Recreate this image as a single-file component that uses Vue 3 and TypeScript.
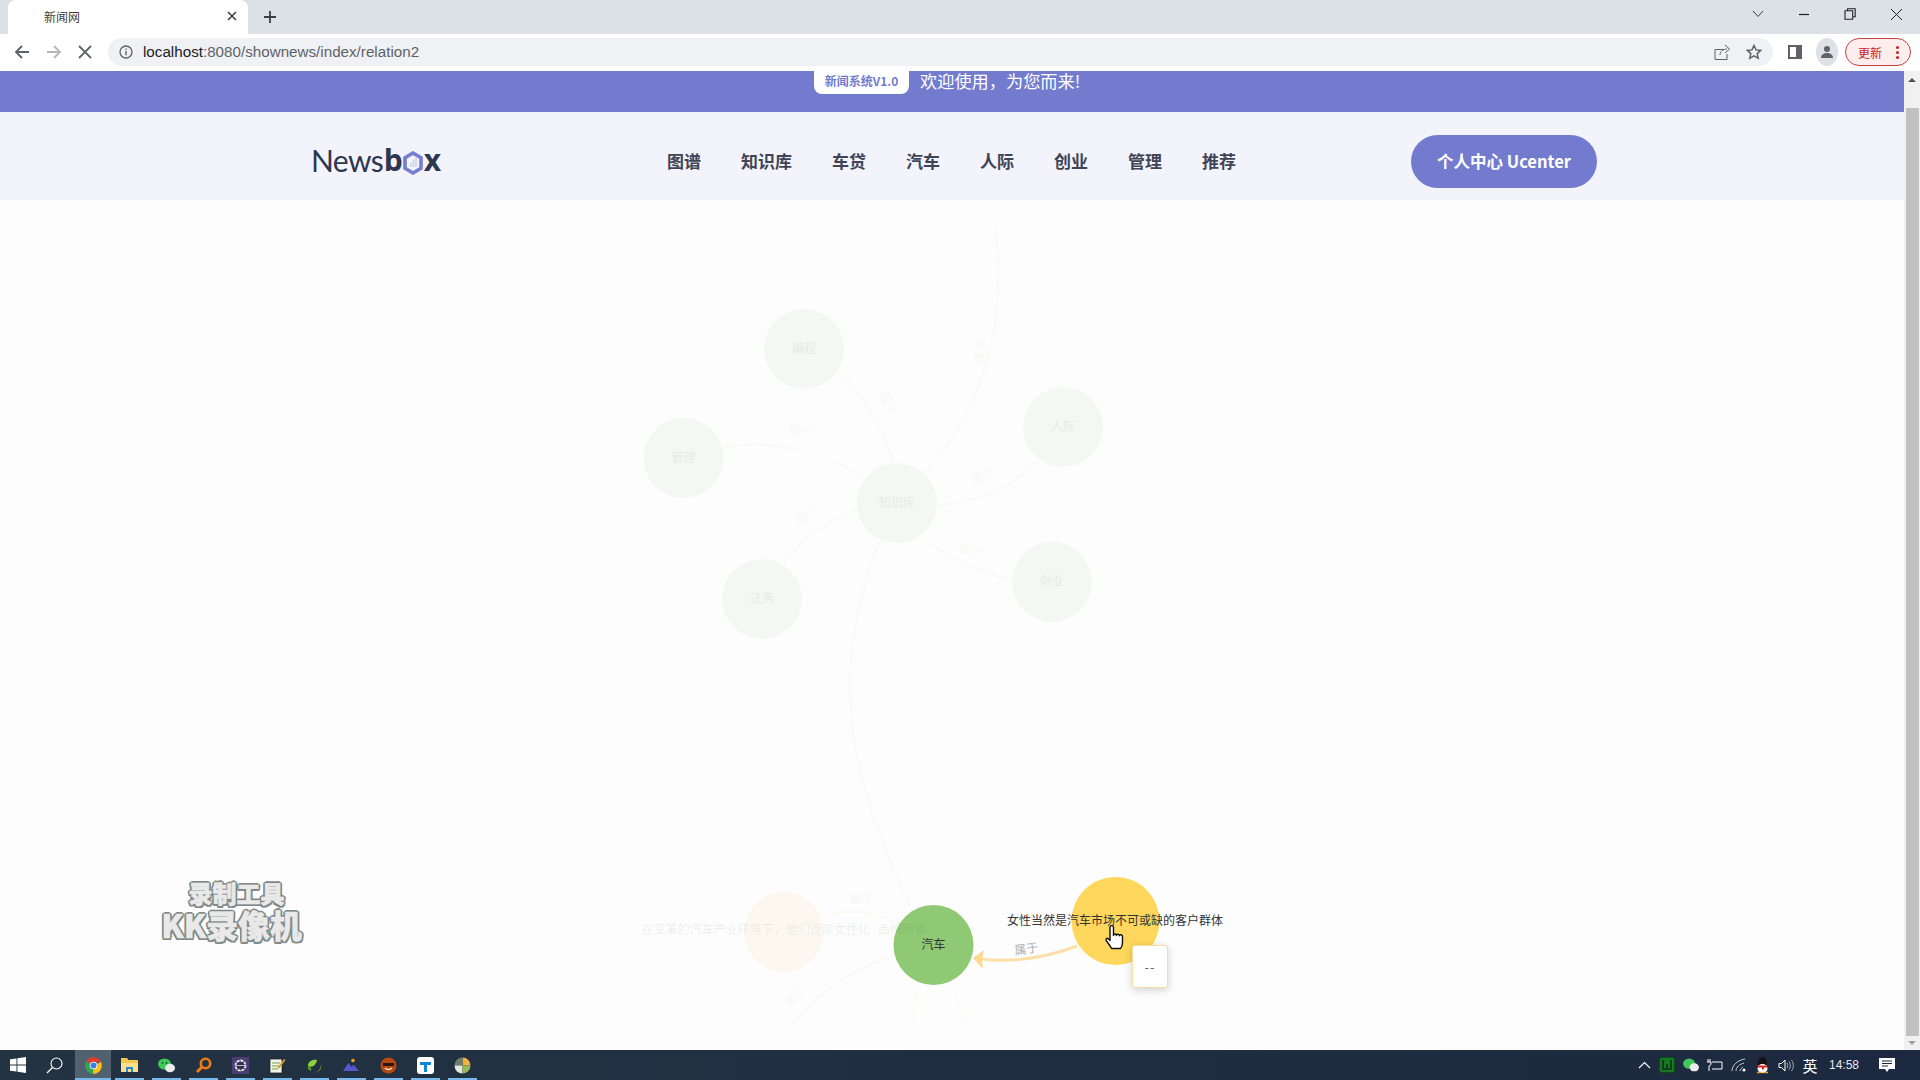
<script setup lang="ts">
interface GraphNode {
  x: number;
  y: number;
  r: number;
  fill: string;
  label: string;
  color: string;
}

const menus = ['图谱', '知识库', '车贷', '汽车', '人际', '创业', '管理', '推荐'];

// coordinates are page pixels, the svg viewBox starts at the top of the canvas
const nodes: GraphNode[] = [
  { x: 804, y: 349, r: 40, fill: '#f4f8f2', label: '编程', color: '#e8eae6' },
  { x: 683.500, y: 458, r: 40, fill: '#f4f8f2', label: '管理', color: '#e8eae6' },
  { x: 897, y: 503, r: 40, fill: '#f4f8f2', label: '知识库', color: '#e8eae6' },
  { x: 1063, y: 427, r: 40, fill: '#f4f8f2', label: '人际', color: '#e8eae6' },
  { x: 1052, y: 582, r: 40, fill: '#f4f8f2', label: '创业', color: '#e8eae6' },
  { x: 762, y: 599, r: 40, fill: '#f4f8f2', label: '法务', color: '#e8eae6' },
  { x: 784, y: 932, r: 40, fill: '#fdf8ef', label: '', color: '' },
  { x: 933.500, y: 945, r: 40, fill: '#8fc973', label: '汽车', color: '#333' },
  { x: 1115.500, y: 921, r: 44, fill: '#fed75c', label: '', color: '' },
];

const fadedEdges = [
  'M995 225 C1004 290 1000 390 925 473',
  'M879 542 C858 600 846 660 851 710 C856 780 880 840 910 907',
  'M838 370 C862 395 884 430 893 462',
  'M722 448 C770 438 820 450 864 477',
  'M1036 462 C1010 490 975 502 939 505',
  'M1012 580 C980 572 950 560 923 538',
  'M784 563 C805 535 830 520 856 510',
  'M793 1023 C820 990 860 965 897 955',
];

const warmEdges = ['M822 917 C850 908 875 912 897 923', 'M913 1020 C914 1008 915 1000 917 990', 'M965 1020 C962 1010 957 1000 953 990'];

const edgeLabels = [
  { x: 885, y: 405, angle: 60 },
  { x: 799, y: 435, angle: 10 },
  { x: 985, y: 353, angle: -75 },
  { x: 985, y: 480, angle: -25 },
  { x: 969, y: 555, angle: 25 },
  { x: 809, y: 518, angle: -35 },
  { x: 798, y: 998, angle: -50 },
  { x: 862, y: 903, angle: -4 },
];
</script>

<template>
  <div class="screen">
    <div class="tabstrip">
      <div class="tab">
        <span class="tab-title">新闻网</span>
        <svg class="tab-close" width="10" height="10" viewBox="0 0 10 10"><path d="M1 1l8 8M9 1l-8 8" stroke="#3c4043" stroke-width="1.6" /></svg>
      </div>
      <svg class="new-tab" width="14" height="14" viewBox="0 0 14 14"><path d="M7 1v12M1 7h12" stroke="#3c4043" stroke-width="1.8" /></svg>
      <div class="win-controls">
        <svg width="12" height="8" viewBox="0 0 12 8"><path d="M1 1l5 5.500L11 1" fill="none" stroke="#3c4043" stroke-width="1" /></svg>
        <svg width="12" height="12" viewBox="0 0 12 12"><path d="M1 6.500h10" stroke="#222" stroke-width="1.2" /></svg>
        <svg width="12" height="12" viewBox="0 0 12 12"><path d="M3.500 2.500V.8h7.700v8H9M1 2.800h7.700v8.400H1z" fill="none" stroke="#222" stroke-width="1.1" /></svg>
        <svg width="13" height="13" viewBox="0 0 13 13"><path d="M1 1l11 11M12 1L1 12" stroke="#222" stroke-width="1" /></svg>
      </div>
    </div>

    <div class="toolbar">
      <div class="nav-btns">
        <svg width="16" height="16" viewBox="0 0 16 16"><path d="M15 8H2M8 2L2 8l6 6" fill="none" stroke="#5f6368" stroke-width="1.9" /></svg>
        <svg width="16" height="16" viewBox="0 0 16 16"><path d="M1 8h13M8 2l6 6-6 6" fill="none" stroke="#b4b6ba" stroke-width="1.9" /></svg>
        <svg width="14" height="14" viewBox="0 0 14 14"><path d="M1 1l12 12M13 1L1 13" stroke="#5f6368" stroke-width="1.8" /></svg>
      </div>
      <div class="address">
        <svg width="14" height="14" viewBox="0 0 14 14">
          <circle cx="7" cy="7" r="6" fill="none" stroke="#5f6368" stroke-width="1.3" />
          <path d="M7 6v4.200M7 3.400v1.400" stroke="#5f6368" stroke-width="1.4" />
        </svg>
        <span class="url"><b>localhost</b>:8080/shownews/index/relation2</span>
        <svg class="share" width="16" height="16" viewBox="0 0 16 16"><path d="M10 5.500H1v10h12V10M6 11c0-3.500 3-6 7-6M11 1l4.500 4-4.500 4" fill="none" stroke="#5f6368" stroke-width="1" /></svg>
        <svg class="star" width="16" height="16" viewBox="0 0 16 16"><path d="M8 1.500l2 4.400 4.700.5-3.500 3.200 1 4.700L8 11.900l-4.200 2.400 1-4.700L1.300 6.400 6 5.900z" fill="none" stroke="#5f6368" stroke-width="1.500" /></svg>
      </div>
      <svg class="panel" width="14" height="14" viewBox="0 0 14 14"><path d="M0 0h14v14H0z" fill="#5f6368" /><path d="M2 2h6v10H2z" fill="#fff" /></svg>
      <div class="avatar">
        <svg width="14" height="14" viewBox="0 0 14 14"><circle cx="7" cy="4" r="3" fill="#5f6368" /><path d="M1 13c0-3.500 3-5 6-5s6 1.500 6 5z" fill="#5f6368" /></svg>
      </div>
      <div class="update">
        <span>更新</span>
        <i class="dots"></i>
      </div>
    </div>

    <div class="viewport">
      <div class="page">
        <div class="notice">
          <span class="version">新闻系统V1.0</span>
          <span class="welcome">欢迎使用，为您而来!</span>
        </div>

        <header class="nav">
          <div class="logo">
            <span class="logo-news">News</span><span class="logo-bold">b</span>
            <svg class="logo-hex" width="20" height="24" viewBox="0 0 20 24">
              <path d="M10 2l8 4.700v10.600L10 22l-8-4.700V6.700z" fill="#f3f3fc" stroke="#757dce" stroke-width="3.600" />
              <path d="M8 16v-4M10.500 16V9M13 16V7" stroke="#c9cdee" stroke-width="1.500" />
            </svg>
            <span class="logo-bold">x</span>
          </div>
          <nav class="menu">
            <a v-for="item in menus" :key="item" class="menu-item">{{ item }}</a>
          </nav>
          <button class="ucenter">个人中心 Ucenter</button>
        </header>

        <main class="stage">
          <svg class="graph" width="1904" height="850" viewBox="0 200 1904 850">
            <path v-for="d in fadedEdges" :key="d" :d="d" class="edge-faded" />
            <path v-for="d in warmEdges" :key="d" :d="d" class="edge-warm" />
            <text
              v-for="(l, i) in edgeLabels"
              :key="i"
              :transform="`translate(${l.x} ${l.y}) rotate(${l.angle})`"
              class="edge-label-faded"
            >
              属于
            </text>
            <path d="M1077 946 C1045 958 1015 963 980 959" class="edge-active" />
            <path d="M973 958 L984 950 L982 960 L983 969 Z" fill="#fdd98f" />
            <g v-for="n in nodes" :key="n.x">
              <circle :cx="n.x" :cy="n.y" :r="n.r" :fill="n.fill" />
              <text v-if="n.label" :x="n.x" :y="n.y + 4" class="node-label" :fill="n.color">{{ n.label }}</text>
            </g>
            <text x="784" y="934" class="node-label cream-label">在变革的汽车产业环境下，他们逐渐女性化 | 品牌新事</text>
            <text x="1115" y="925" class="node-label active-label">女性当然是汽车市场不可或缺的客户群体</text>
            <text transform="translate(1027 953) rotate(-8)" class="edge-label">属于</text>
            <!-- mouse pointer -->
            <path
              d="M1110 927.500c0-2.500 3.500-2.500 3.500 0v8c0-2 3-2 3 0 0-1.800 3-1.800 3 .3 0-1.500 3-1.500 3 .7v6c0 3-1.500 5.500-2 6h-9c-1.500-3-3-5-5-7.500-1.500-2 .5-3.500 2-2l1.500 1.500z"
              fill="#fff"
              stroke="#111"
              stroke-width="1.400"
              stroke-linejoin="round"
            />
          </svg>

          <div class="tip">--</div>

          <div class="watermark">
            <span class="wm-top">录制工具</span>
            <span class="wm-bottom">KK录像机</span>
          </div>
        </main>
      </div>

      <div class="scrollbar">
        <i class="arrow-up"></i>
        <div class="thumb"></div>
        <i class="arrow-down"></i>
      </div>
    </div>

    <footer class="taskbar">
      <div class="task start">
        <svg width="16" height="16" viewBox="0 0 16 16"><path d="M0 2.300l6.500-.9v6.200H0zM7.400 1.300L16 0v7.600H7.400zM0 8.400h6.500v6.200L0 13.700zM7.400 8.400H16V16l-8.600-1.200z" fill="#fff" /></svg>
      </div>
      <div class="task search">
        <svg width="17" height="17" viewBox="0 0 17 17"><circle cx="10.500" cy="6.500" r="5.500" fill="none" stroke="#fff" stroke-width="1.100" /><path d="M6.500 10.500L1 16" stroke="#fff" stroke-width="1.300" /></svg>
      </div>
      <div class="task active open">
        <svg width="17" height="17" viewBox="0 0 17 17">
          <path d="M8.500 8.500L1.300 4.300A8.300 8.300 0 0 1 16 5H8.500z" fill="#e33b2e" />
          <path d="M8.500 8.500L1.300 4.300A8.300 8.300 0 0 0 8 16.800z" fill="#2fa650" />
          <path d="M8.500 8.500L16 5A8.300 8.300 0 0 1 8 16.800z" fill="#fbc116" />
          <circle cx="8.500" cy="8.500" r="3.800" fill="#fff" /><circle cx="8.500" cy="8.500" r="3" fill="#3b7fe6" />
        </svg>
      </div>
      <div class="task open">
        <svg width="17" height="16" viewBox="0 0 17 16"><path d="M0 1h6l1.500 2H17v12H0z" fill="#f5c74f" /><path d="M0 6h17v9H0z" fill="#fbe08b" /><path d="M5 15v-5h7v5h-2v-3H7v3z" fill="#2a86d8" /></svg>
      </div>
      <div class="task open">
        <svg width="17" height="15" viewBox="0 0 17 15"><ellipse cx="6.500" cy="6" rx="6.500" ry="5.500" fill="#3fc85a" /><ellipse cx="12" cy="10" rx="5" ry="4.300" fill="#e9ecea" /><circle cx="4.500" cy="5" r=".9" fill="#1c5b2a" /><circle cx="8.500" cy="5" r=".9" fill="#1c5b2a" /></svg>
      </div>
      <div class="task open">
        <svg width="17" height="17" viewBox="0 0 17 17"><circle cx="10.500" cy="6.500" r="4.700" fill="none" stroke="#f07a14" stroke-width="2.600" /><path d="M7 10L2 15" stroke="#f07a14" stroke-width="3" /></svg>
      </div>
      <div class="task open">
        <svg width="17" height="17" viewBox="0 0 17 17"><path d="M0 0h17v17H0z" fill="#4a3f72" /><circle cx="8.500" cy="8.500" r="5" fill="#35304f" stroke="#e8e8ee" stroke-width="1.800" stroke-dasharray="3 .8" /><path d="M4 8.500h9" stroke="#b8b6c8" stroke-width="1" /></svg>
      </div>
      <div class="task open">
        <svg width="17" height="17" viewBox="0 0 17 17"><path d="M1 2h12v14H1z" fill="#f2f4ea" stroke="#222" stroke-width=".8" /><path d="M3 6h8M3 9h8M3 12h6" stroke="#6ea13c" stroke-width="1" /><path d="M9 10l6-8 1.500 1-6 8-2 1z" fill="#d9a11e" /></svg>
      </div>
      <div class="task open">
        <svg width="17" height="17" viewBox="0 0 17 17"><path d="M2 9c0-5 5-7 9-6-1 5-4 8-9 6zM7 15c4 1 8-2 8-8 1 5-2 9-8 8z" fill="#8ed23a" /><path d="M5 14c-3-1-4-3-3-5 2 0 4 2 3 5z" fill="#4d9e24" /></svg>
      </div>
      <div class="task open">
        <svg width="17" height="15" viewBox="0 0 17 15"><path d="M0 13L5.500 5l3 4 2-2.500L16 13z" fill="#5a55c9" /><circle cx="10" cy="2.500" r="1.800" fill="#f0a326" /></svg>
      </div>
      <div class="task open">
        <svg width="17" height="17" viewBox="0 0 17 17"><circle cx="8.500" cy="8.500" r="8" fill="#b8480f" /><path d="M3 6h11v3H3z" fill="#2a1710" /><path d="M5 11c2 2 5 2 7 0" fill="none" stroke="#f3dfc8" stroke-width="1.500" /></svg>
      </div>
      <div class="task open">
        <svg width="17" height="17" viewBox="0 0 17 17"><rect width="17" height="17" rx="3" fill="#fff" /><path d="M3 5h11v3H10v7H7V8H3z" fill="#1486d6" /></svg>
      </div>
      <div class="task open">
        <svg width="17" height="17" viewBox="0 0 17 17"><path d="M8.500 .5a8 8 0 0 1 8 8h-8z" fill="#f0b23c" /><path d="M8.500 .5a8 8 0 0 0-8 8h8z" fill="#6f7f6f" /><path d="M.5 8.500a8 8 0 0 0 8 8v-8z" fill="#e5e8df" /><path d="M8.500 16.500a8 8 0 0 0 8-8h-8z" fill="#95b85a" /></svg>
      </div>

      <div class="tray">
        <svg width="13" height="8" viewBox="0 0 13 8"><path d="M1 7l5.500-5.500L12 7" fill="none" stroke="#fff" stroke-width="1.100" /></svg>
        <svg width="16" height="16" viewBox="0 0 16 16"><rect x=".5" y=".5" width="15" height="15" rx="2" fill="#177a23" stroke="#0c4c14" /><path d="M4 3v9h8V3M8 7v5" fill="none" stroke="#0e3d16" stroke-width="2" /></svg>
        <svg width="16" height="14" viewBox="0 0 17 15"><ellipse cx="6.500" cy="6" rx="6.500" ry="5.500" fill="#3fc85a" /><ellipse cx="12" cy="10" rx="5" ry="4.300" fill="#e9ecea" /></svg>
        <svg width="16" height="12" viewBox="0 0 16 12"><path d="M5 3h10v7H5M3 0v3M1 0v3M0 3h4v2.500L2 7v5" fill="none" stroke="#fff" stroke-width="1" /></svg>
        <svg width="16" height="14" viewBox="0 0 16 14"><path d="M1 13C1 7 7 2 14 1M5 13c0-4 4-7 8-8M9 13c0-2 2-3 3-4" fill="none" stroke="#c8ccd2" stroke-width="1" /><circle cx="13" cy="12" r="1.500" fill="#fff" /></svg>
        <svg width="15" height="17" viewBox="0 0 15 17"><ellipse cx="7.500" cy="6" rx="4.500" ry="6" fill="#111" /><ellipse cx="7.500" cy="11.500" rx="5" ry="4.500" fill="#fff" /><path d="M3 8.500h9v2H9v2H7v-2H3z" fill="#d8261c" /><path d="M2 15.500h4.500M8.500 15.500H13" stroke="#f0a31c" stroke-width="1.500" /></svg>
        <svg width="16" height="13" viewBox="0 0 16 13"><path d="M1 4.500h2.500L7 1v11L3.500 8.500H1z" fill="none" stroke="#fff" stroke-width="1" /><path d="M9 4c1 1.500 1 3.500 0 5M11 2.500c1.800 2.500 1.800 5.500 0 8M13.500 1c2.500 3.500 2.500 7.500 0 11" fill="none" stroke="#aab0b8" stroke-width="1" /></svg>
        <span class="lang">英</span>
        <span class="clock">14:58</span>
        <svg class="msg" width="16" height="15" viewBox="0 0 16 15"><path d="M0 0h16v11H10l-2 3-2-3H0z" fill="#fff" /><path d="M3 3h10M3 5.500h10M3 8h6" stroke="#1c2a40" stroke-width="1" /></svg>
      </div>
    </footer>
  </div>
</template>

<style scoped>
.screen {
  display: flex;
  flex-direction: column;
  width: 1920px;
  height: 1080px;
  overflow: hidden;
  font-family: 'Noto Sans CJK SC', 'Noto Sans', sans-serif;
}

.tabstrip {
  display: flex;
  align-items: flex-end;
  flex: 0 0 34px;
  padding-left: 8px;
  background: #dce0e7;
}
.tab {
  display: flex;
  align-items: center;
  width: 240px;
  height: 34px;
  padding: 0 11px 2px 36px;
  box-sizing: border-box;
  background: #fff;
  border-radius: 8px 8px 0 0;
}
.tab-title {
  flex: 1;
  font-size: 12px;
  color: #3c4043;
}
.new-tab {
  margin: 0 0 10px 15px;
}
.win-controls {
  display: flex;
  align-items: center;
  gap: 34px;
  height: 28px;
  margin-left: auto;
  padding-right: 17px;
  align-self: flex-start;
}

.toolbar {
  display: flex;
  align-items: center;
  flex: 0 0 37px;
  box-sizing: border-box;
  padding-bottom: 1px;
  background: #fff;
}
.nav-btns {
  display: flex;
  align-items: center;
  gap: 16px;
  width: 108px;
  padding-left: 14px;
  box-sizing: border-box;
}
.address {
  display: flex;
  align-items: center;
  width: 1665px;
  height: 28px;
  padding: 0 11px;
  box-sizing: border-box;
  background: #eff1f4;
  border-radius: 14px;
}
.url {
  margin: -2px 0 0 10px;
  font-family: 'Liberation Sans', sans-serif;
  font-size: 15.200px;
  color: #5f6368;
}
.url b {
  font-weight: 400;
  color: #202124;
}
.share {
  margin-left: auto;
  margin-right: 16px;
}
.panel {
  margin-left: 15px;
}
.avatar {
  display: flex;
  align-items: center;
  justify-content: center;
  width: 22px;
  height: 28px;
  margin-left: 14px;
  background: #dee1e6;
  border-radius: 50%;
}
.update {
  display: flex;
  align-items: center;
  width: 66px;
  height: 28px;
  margin-left: 7px;
  padding-left: 12px;
  box-sizing: border-box;
  font-size: 12px;
  color: #c5221f;
  background: #fdeeed;
  border: 1px solid #c5423c;
  border-radius: 14px;
}
.dots {
  width: 3px;
  height: 3px;
  margin-left: 14px;
  background: #c5221f;
  border-radius: 50%;
  box-shadow: 0 -5px 0 #c5221f, 0 5px 0 #c5221f;
}

.viewport {
  display: flex;
  flex: 1;
  min-height: 0;
}
.page {
  display: flex;
  flex-direction: column;
  flex: 1;
  min-width: 0;
  background: #fdfdfd;
}

.notice {
  display: flex;
  align-items: flex-start;
  flex: 0 0 41px;
  padding-left: 814px;
  background: #737bce;
}
.version {
  width: 95px;
  height: 23px;
  font-size: 12px;
  font-weight: 700;
  line-height: 19px;
  text-align: center;
  color: #737bce;
  background: #fff;
  border-radius: 0 0 8px 8px;
}
.welcome {
  margin: -3px 0 0 11px;
  font-size: 17.200px;
  line-height: 26px;
  color: #fff;
}

.nav {
  display: flex;
  align-items: center;
  flex: 0 0 88px;
  box-sizing: border-box;
  padding: 11px 0 0 311px;
  background: #f3f3fc;
}
.logo {
  display: flex;
  align-items: center;
  width: 130px;
  height: 40px;
  margin-top: -4px;
  font-size: 30px;
  color: #2e3650;
}
.logo-news {
  width: 73px;
  font-family: 'Lato', sans-serif;
  letter-spacing: -0.6px;
}
.logo-bold {
  font-family: 'Open Sans', sans-serif;
  font-weight: 700;
}
.logo-hex {
  flex: none;
  margin: 6px 1px 0 0;
}
.menu {
  display: flex;
  gap: 40px;
  margin-top: -2px;
  margin-left: 226px;
}
.menu-item {
  font-size: 17px;
  font-weight: 700;
  color: #3f4556;
}
.ucenter {
  width: 186px;
  height: 53px;
  margin-left: 175px;
  padding: 0 0 2px;
  font-family: inherit;
  font-size: 16.500px;
  font-weight: 700;
  color: #fff;
  background: #737bce;
  border: 0;
  border-radius: 27px;
}

.stage {
  position: relative;
  flex: 1;
  min-height: 0;
}
.graph {
  display: block;
}
.edge-faded {
  fill: none;
  stroke: #f9faf8;
  stroke-width: 2;
}
.edge-warm {
  fill: none;
  stroke: #fdfaf1;
  stroke-width: 2;
}
.edge-active {
  fill: none;
  stroke: #fde0a8;
  stroke-width: 3;
}
.edge-label-faded {
  font-size: 12px;
  text-anchor: middle;
  fill: #f8f8f7;
}
.edge-label {
  font-size: 12px;
  text-anchor: middle;
  fill: #b2b2b2;
}
.node-label {
  font-size: 12px;
  text-anchor: middle;
}
.cream-label {
  fill: rgba(60, 60, 60, 0.09);
}
.active-label {
  fill: #333;
}
.tip {
  position: absolute;
  left: 1132px;
  top: 745px;
  width: 34px;
  height: 41px;
  font-size: 13px;
  letter-spacing: 1px;
  line-height: 41px;
  text-align: center;
  color: #666;
  background: #fff;
  border: 1px solid #f6dc9f;
  border-radius: 3px;
  box-shadow: 0 2px 8px rgba(0, 0, 0, 0.18);
}
.watermark {
  position: absolute;
  left: 158px;
  top: 678px;
  display: flex;
  flex-direction: column;
  align-items: center;
  width: 147px;
  font-weight: 900;
  color: #e9e9e9;
  -webkit-text-stroke: 0.500px #e9e9e9;
  text-shadow: 2px 0 0 #7f8a88, -2px 0 0 #7f8a88, 0 2px 0 #7f8a88, 0 -2px 0 #7f8a88, 1.500px 1.500px 0 #7f8a88, -1.500px 1.500px 0 #7f8a88, 1.500px -1.500px 0 #7f8a88, -1.500px -1.500px 0 #7f8a88;
}
.wm-top {
  margin-left: 10px;
  font-size: 24px;
  line-height: 30px;
}
.wm-bottom {
  font-size: 31.800px;
  line-height: 33px;
  white-space: nowrap;
}

.scrollbar {
  display: flex;
  flex-direction: column;
  align-items: center;
  flex: 0 0 16px;
  background: #f1f1f1;
}
.arrow-up,
.arrow-down {
  flex: 0 0 auto;
  width: 0;
  height: 0;
  border-left: 4px solid transparent;
  border-right: 4px solid transparent;
}
.arrow-up {
  margin: 7px 0 26px;
  border-bottom: 4px solid #505050;
}
.arrow-down {
  margin: 5px 0 5px;
  border-top: 4px solid #a3a3a3;
}
.thumb {
  flex: 1;
  width: 13px;
  background: #c1c1c1;
}

.taskbar {
  display: flex;
  flex: 0 0 30px;
  background: linear-gradient(90deg, #233342, #1c2940);
}
.task {
  position: relative;
  display: flex;
  align-items: center;
  justify-content: center;
  width: 37px;
  height: 30px;
}
.start {
  width: 36px;
}
.search {
  width: 39px;
  padding-right: 3px;
  box-sizing: border-box;
}
.active {
  width: 36px;
  background: #51626e;
}
.open::after {
  content: '';
  position: absolute;
  left: 4px;
  right: 4px;
  bottom: 0;
  height: 2px;
  background: #76b9ed;
}
.active.open::after {
  left: 0;
  right: 0;
}
.tray {
  display: flex;
  align-items: center;
  gap: 8px;
  margin-left: auto;
  padding-right: 25px;
}
.lang {
  font-size: 15px;
  color: #fff;
}
.clock {
  margin-left: 3.500px;
  font-family: 'Liberation Sans', sans-serif;
  font-size: 12px;
  color: #e8eaee;
}
.msg {
  margin-left: 12px;
}
</style>

<style>
html,
body {
  margin: 0;
  overflow: hidden;
}
</style>
